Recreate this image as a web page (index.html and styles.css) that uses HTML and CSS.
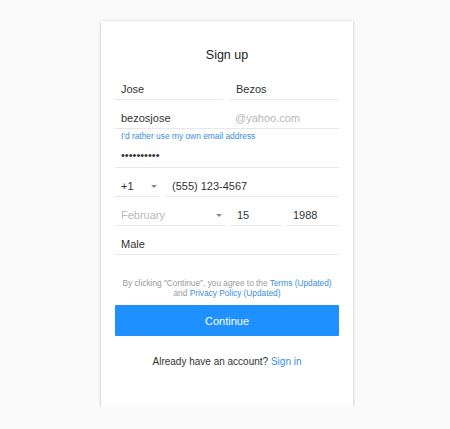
FILE: index.html
```html
<!DOCTYPE html>
<html>
<head>
<meta charset="utf-8">
<link rel="stylesheet" href="styles.css">
</head>
<body>
<div class="card">
  <h1 class="title">Sign up</h1>
  <div class="row">
    <div class="field w-name">Jose</div>
    <div class="field w-name">Bezos</div>
  </div>
  <div class="row">
    <div class="field email"><span class="user">bezosjose</span><span class="ph">@yahoo.com</span></div>
  </div>
  <a class="alt-link">I'd rather use my own email address</a>
  <div class="row">
    <div class="field pw">••••••••••</div>
  </div>
  <div class="row">
    <div class="field select w-country"><span>+1</span><span class="caret"></span></div>
    <div class="field grow">(555) 123-4567</div>
  </div>
  <div class="row">
    <div class="field select w-month"><span class="ph">February</span><span class="caret"></span></div>
    <div class="field w-day">15</div>
    <div class="field w-year">1988</div>
  </div>
  <div class="row">
    <div class="field grow">Male</div>
  </div>
  <p class="terms">By clicking "Continue", you agree to the <a>Terms (Updated)</a><br>and <a>Privacy Policy (Updated)</a></p>
  <button class="btn">Continue</button>
  <p class="signin">Already have an account? <a>Sign in</a></p>
</div>
</body>
</html>
```
FILE: styles.css
```css
html, body {
  margin: 0;
  padding: 0;
  background: #fafafa;
}
body {
  padding: 21px 0 0 101px;
  font-family: "Liberation Sans", Arial, sans-serif;
  color: #333;
}
.card {
  box-sizing: border-box;
  width: 252px;
  height: 386px;
  background: #fff;
  box-shadow: 0 1px 3px rgba(0,0,0,0.22), 0 0 1px rgba(0,0,0,0.12);
  padding: 27px 14px 0 14px;
  display: flex;
  flex-direction: column;
}
.title {
  margin: 0 0 8px 0;
  font-size: 12.5px;
  line-height: 15px;
  font-weight: normal;
  text-align: center;
  color: #222;
}
.row {
  display: flex;
  gap: 7px;
  width: 224px;
}
.field {
  box-sizing: border-box;
  height: 29px;
  border-bottom: 1px solid #e8e8e8;
  padding: 0 6px 3px 6px;
  display: flex;
  align-items: flex-end;
  font-size: 11px;
  line-height: 13px;
  color: #333;
}
.w-name { width: 108px; }
.email { width: 224px; }
.email .user { width: 114px; }
.ph { color: #b8b8b8; }
.pw {
  width: 224px;
  height: 27px;
  padding-bottom: 5px;
  letter-spacing: 0;
}
.alt-link {
  margin-top: 2px;
  padding-left: 6px;
  font-size: 8.4px;
  line-height: 10px;
  color: #3a8ee0;
}
.grow { flex: 1; }
.select { justify-content: space-between; }
.caret {
  width: 0;
  height: 0;
  border-left: 3px solid transparent;
  border-right: 3px solid transparent;
  border-top: 3px solid #8a8a8a;
  margin-bottom: 5px;
}
.row:has(.w-country) { gap: 6px; }
.w-country { width: 45px; padding-right: 3px; }
.row:has(.w-month) { gap: 5px; }
.w-month { width: 111px; padding-right: 4px; }
.w-day { width: 51px; }
.w-year { width: 52px; }
.terms {
  margin: 23px 0 0 0;
  font-size: 8.3px;
  line-height: 10px;
  text-align: center;
  color: #9a9a9a;
}
.terms a, .signin a { color: #3a8ee0; }
.btn {
  margin-top: 7px;
  width: 224px;
  height: 31px;
  border: none;
  border-radius: 1px;
  background: #1e90ff;
  color: #fff;
  font-family: "Liberation Sans", Arial, sans-serif;
  font-size: 11px;
  padding: 0;
}
.signin {
  margin: 20px 0 0 0;
  font-size: 10px;
  line-height: 12px;
  text-align: center;
  color: #333;
}
```
